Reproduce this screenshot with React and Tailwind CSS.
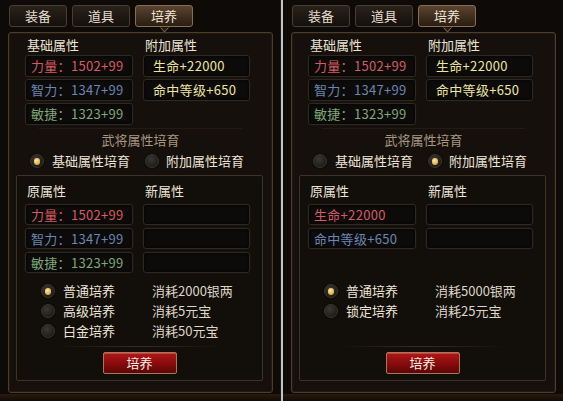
import React from 'react';

const font = { fontFamily: '"Noto Sans CJK SC", "Noto Sans", sans-serif' };

const Radio = ({ on }) => (
  <span className="flex h-[14px] w-[14px] shrink-0 items-center justify-center rounded-full border border-[#3a3530] bg-[radial-gradient(circle_at_40%_35%,#3a3834,#141210)] shadow-[0_0_2px_#000]">
    {on && <span className="h-[7px] w-[6px] rounded-full bg-[radial-gradient(circle_at_40%_35%,#ffe9a0,#c8901c)]" />}
  </span>
);

const StatBox = ({ children, color = 'text-[#e0d8c8]', h = 'h-[22px]' }) => (
  <div className={`flex ${h} items-center rounded-[3px] border border-[#2e2823] bg-[#0d0b09] pl-[5px] text-[13px] tracking-[0.3px] shadow-[inset_0_0_3px_#000,0_0_0_1px_#17120d] ${color}`}>
    {children}
  </div>
);

const Tab = ({ label, active }) => (
  <div className="relative">
    <div
      className={`flex h-[22px] w-[58px] items-center justify-center rounded-[3px] border text-[13px] ${
        active
          ? 'border-[#8a6d4c] bg-gradient-to-b from-[#5b4330] to-[#2a1d12] text-[#f0e6d6]'
          : 'border-[#4a3d30] bg-gradient-to-b from-[#2a221b] to-[#14100c] text-[#e6ddd0]'
      }`}
    >
      {label}
    </div>
    {active && (
      <svg className="absolute left-[25px] top-[22px]" width="9" height="6" viewBox="0 0 9 6">
        <path d="M0.5 0.5 L4.5 5 L8.5 0.5" fill="#2a1d12" stroke="#8a6d4c" strokeWidth="1" />
      </svg>
    )}
  </div>
);

const Panel = ({ mode }) => {
  const base = mode === 'base';
  const olds = base
    ? [
        ['力量：1502+99', 'text-[#d65a62]'],
        ['智力：1347+99', 'text-[#6a86b2]'],
        ['敏捷：1323+99', 'text-[#7ea878]'],
      ]
    : [
        ['生命+22000', 'text-[#d65a62]'],
        ['命中等级+650', 'text-[#6a86b2]'],
      ];
  const options = base
    ? [
        ['普通培养', '消耗2000银两', true],
        ['高级培养', '消耗5元宝', false],
        ['白金培养', '消耗50元宝', false],
      ]
    : [
        ['普通培养', '消耗5000银两', true],
        ['锁定培养', '消耗25元宝', false],
      ];

  return (
    <div className="flex h-[401px] w-[280px] flex-col bg-[#0d0a07]">
      <div className="ml-[9px] mt-[5px] flex gap-[5px]">
        <Tab label="装备" />
        <Tab label="道具" />
        <Tab label="培养" active />
      </div>

      <div className="ml-[8px] mt-[5px] flex h-[361px] w-[265px] flex-col rounded-[3px] border border-[#4d3c2a] bg-[#15100b] shadow-[inset_0_0_0_1px_#221a12]">
        <div className="flex pl-[18px] pt-[4px] text-[13px] leading-[16px] text-[#ece4d6]">
          <span className="w-[118px]">基础属性</span>
          <span>附加属性</span>
        </div>
        <div className="mt-[2px] flex gap-[10px] pl-[16px]">
          <div className="flex w-[108px] flex-col gap-[2px]">
            <StatBox color="text-[#d65a62]">力量：1502+99</StatBox>
            <StatBox color="text-[#6a86b2]">智力：1347+99</StatBox>
            <StatBox color="text-[#7ea878]">敏捷：1323+99</StatBox>
          </div>
          <div className="flex w-[107px] flex-col gap-[2px]">
            <StatBox color="text-[#ece4a0]">
              <span className="pl-[4px]">生命+22000</span>
            </StatBox>
            <StatBox color="text-[#ece4a0]">
              <span className="pl-[4px]">命中等级+650</span>
            </StatBox>
          </div>
        </div>

        <div className="mx-[30px] mt-[3px] h-px bg-[#231b13]" />
        <div className="mt-[3px] text-center text-[13px] leading-[16px] text-[#a89680]">武将属性培育</div>

        <div className="mt-[5px] flex h-[16px] items-center pl-[21px] text-[13px] text-[#ece4d6]">
          <Radio on={base} />
          <span className="ml-[8px] w-[93px]">基础属性培育</span>
          <Radio on={!base} />
          <span className="ml-[7px]">附加属性培育</span>
        </div>

        <div className="ml-[7px] mt-[6px] flex h-[206px] w-[247px] flex-col rounded-[2px] border border-[#3e3226] bg-[#120e0a]">
          <div className="flex pl-[10px] pt-[7px] text-[13px] leading-[16px] text-[#ece4d6]">
            <span className="w-[118px]">原属性</span>
            <span>新属性</span>
          </div>
          <div className="mt-[5px] flex h-[69px] gap-[10px] pl-[8px]">
            <div className="flex w-[108px] flex-col gap-[3px]">
              {olds.map(([t, c]) => (
                <StatBox key={t} color={c} h="h-[21px]">
                  {t}
                </StatBox>
              ))}
            </div>
            <div className="flex w-[107px] flex-col gap-[3px]">
              {olds.map(([t]) => (
                <StatBox key={t} h="h-[21px]" />
              ))}
            </div>
          </div>

          <div className="mt-[8px] flex h-[60px] flex-col pl-[24px]">
            {options.map(([name, cost, on]) => (
              <div key={name} className="flex h-[20px] items-center text-[13px] text-[#ece4d6]">
                <Radio on={on} />
                <span className="ml-[8px] w-[89px]">{name}</span>
                <span className="text-[#ddd5c6]">{cost}</span>
              </div>
            ))}
          </div>

          <div className="mx-[38px] mt-[5px] h-px bg-gradient-to-r from-transparent via-[#3a2e22] to-transparent" />

          <div className="mt-[5px] flex justify-center">
            <div className="flex h-[22px] w-[74px] items-center justify-center rounded-[2px] border border-[#a07a5a] bg-gradient-to-b from-[#b01818] via-[#8a0c0c] to-[#5e0606] text-[13px] text-[#f4eee6] shadow-[inset_0_1px_0_#d04040]">
              培养
            </div>
          </div>
        </div>
      </div>
      <div className="mt-[1px] h-[7px] bg-gradient-to-b from-[#2a1a0e] to-[#120b06]" />
    </div>
  );
};

export default function App() {
  return (
    <div className="flex h-[401px] w-[563px] overflow-hidden bg-black" style={font}>
      <Panel mode="base" />
      <div className="h-[401px] w-[3px] border-l border-[#1a1a1a] bg-[#c4c4c4]" />
      <Panel mode="extra" />
    </div>
  );
}
